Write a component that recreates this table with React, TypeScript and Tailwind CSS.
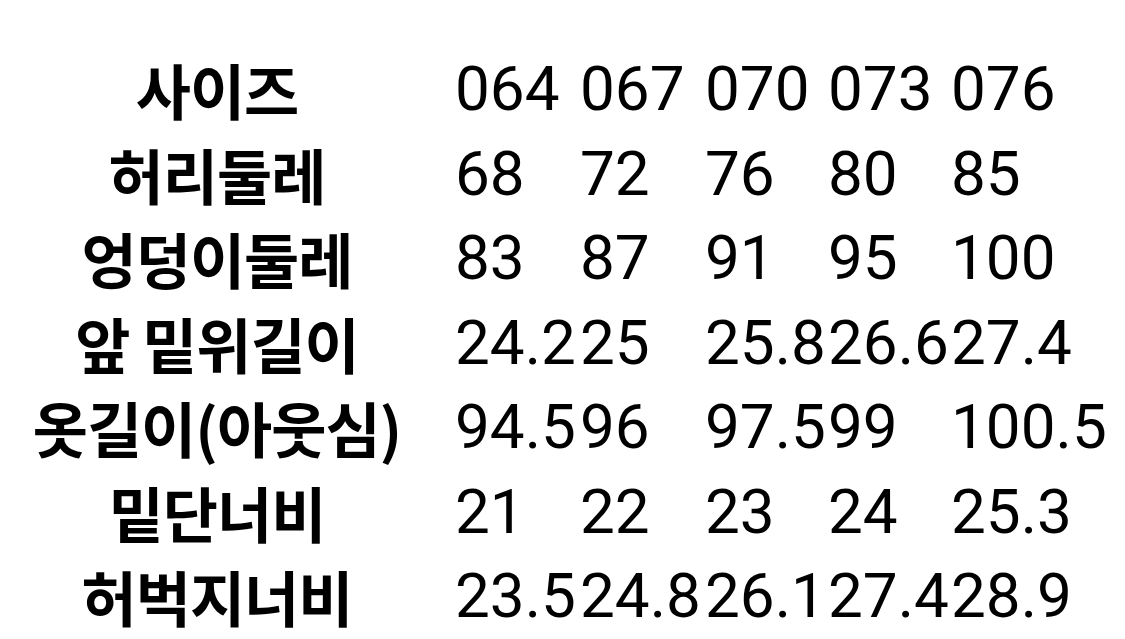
const rows: [string, string[]][] = [
  ["사이즈", ["064", "067", "070", "073", "076"]],
  ["허리둘레", ["68", "72", "76", "80", "85"]],
  ["엉덩이둘레", ["83", "87", "91", "95", "100"]],
  ["앞 밑위길이", ["24.2", "25", "25.8", "26.6", "27.4"]],
  ["옷길이(아웃심)", ["94.5", "96", "97.5", "99", "100.5"]],
  ["밑단너비", ["21", "22", "23", "24", "25.3"]],
  ["허벅지너비", ["23.5", "24.8", "26.1", "27.4", "28.9"]],
];

export default function App() {
  return (
    <div className="h-[639px] w-[1125px] overflow-hidden bg-white pt-[47px] text-black">
      <div className="grid grid-cols-[455px_125px_125px_123px_123px_auto]">
        {rows.map(([label, values]) => (
          <div key={label} className="contents">
            <div className="flex h-[84.5px] items-center justify-center whitespace-nowrap pr-[21px] font-['Noto_Sans_CJK_KR',sans-serif] text-[60px] leading-none font-bold tracking-[-1px]">
              {label}
            </div>
            {values.map((v, i) => (
              <div
                key={i}
                className="flex h-[84.5px] items-center whitespace-nowrap font-['Roboto',sans-serif] text-[62px] leading-none"
              >
                {v}
              </div>
            ))}
          </div>
        ))}
      </div>
    </div>
  );
}
